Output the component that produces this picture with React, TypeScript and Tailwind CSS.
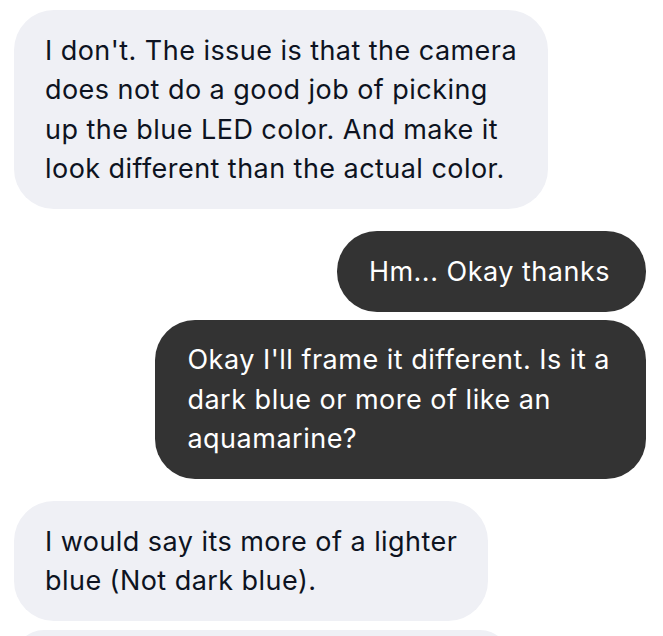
import React from "react";

type Msg = { id: number; mine: boolean; lines: string[] };

const messages: Msg[] = [
    {
        id: 1,
        mine: false,
        lines: [
            "I don't. The issue is that the camera",
            "does not do a good job of picking",
            "up the blue LED color. And make it",
            "look different than the actual color.",
        ],
    },
    { id: 2, mine: true, lines: ["Hm... Okay thanks"] },
    {
        id: 3,
        mine: true,
        lines: ["Okay I'll frame it different. Is it a", "dark blue or more of like an", "aquamarine?"],
    },
    { id: 4, mine: false, lines: ["I would say its more of a lighter", "blue (Not dark blue)."] },
];

export default function App() {
    return (
        <div className="h-[636px] w-[663px] overflow-hidden bg-white font-['Inter','Liberation_Sans',sans-serif]">
            <div className="flex flex-col pl-[14px] pr-[17px] pt-[10px]">
                {messages.map((m, i) => {
                    const prev = messages[i - 1];
                    const gap = !prev ? "" : prev.mine === m.mine ? "mt-[8px]" : "mt-[22px]";
                    return (
                        <div
                            key={m.id}
                            className={`flex ${m.mine ? "justify-end" : "justify-start"} ${gap}`}
                        >
                            <div
                                className={
                                    m.mine
                                        ? "rounded-[40px] bg-[#333333] py-[20.5px] pl-[32px] pr-[36px] text-[27px] leading-[39.5px] tracking-[0.5px] text-white"
                                        : "rounded-[40px] bg-[#eff0f5] px-[31px] py-[20.5px] text-[27px] leading-[39.5px] tracking-[0.45px] text-[#0d1321]"
                                }
                            >
                                {m.lines.map((l, j) => (
                                    <div key={j} className="whitespace-nowrap">
                                        {l}
                                    </div>
                                ))}
                            </div>
                        </div>
                    );
                })}
                {/* next bubble, cut off by the bottom edge */}
                <div className="mt-[9px] flex justify-start">
                    <div className="h-[60px] w-[496px] rounded-[40px] bg-[#eff0f5]" />
                </div>
            </div>
        </div>
    );
}
